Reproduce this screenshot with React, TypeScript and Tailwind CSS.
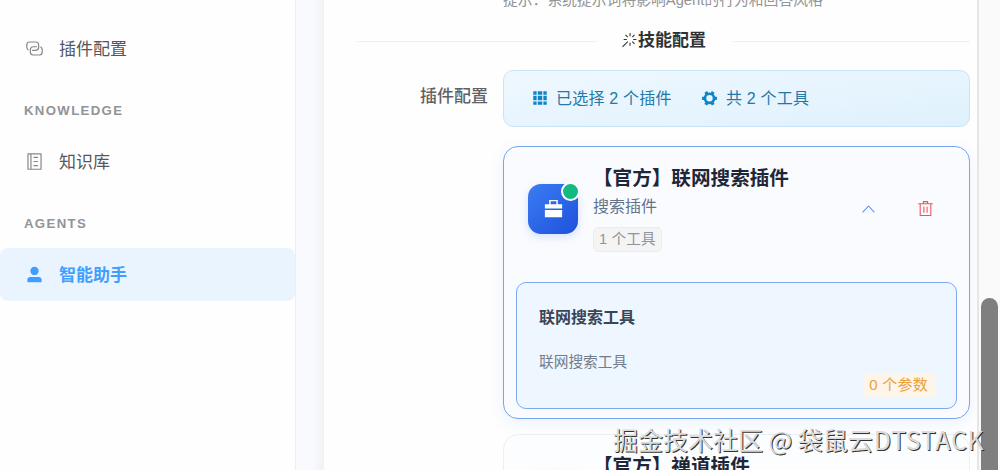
import React from 'react';
import clsx from 'clsx';

interface IconProps {
  paths: string[];
  className?: string;
}

const Icon: React.FC<IconProps> = ({ paths, className }) => (
  <svg viewBox="0 0 1024 1024" fill="currentColor" className={clsx('shrink-0', className)}>
    {paths.map((d) => (
      <path key={d} d={d} />
    ))}
  </svg>
);

const icons = {
  connection: [
    'M640 384v64H448a128 128 0 0 0-128 128v128a128 128 0 0 0 128 128h320a128 128 0 0 0 128-128V576a128 128 0 0 0-64-110.848V394.88c74.56 26.368 128 97.472 128 181.056v128a192 192 0 0 1-192 192H448a192 192 0 0 1-192-192V576a192 192 0 0 1 192-192z',
    'M384 640v-64h192a128 128 0 0 0 128-128V320a128 128 0 0 0-128-128H256a128 128 0 0 0-128 128v128a128 128 0 0 0 64 110.848v70.272A192.064 192.064 0 0 1 64 448V320a192 192 0 0 1 192-192h320a192 192 0 0 1 192 192v128a192 192 0 0 1-192 192z',
  ],
  memo: [
    'M480 256h192a32 32 0 0 1 0 64H480a32 32 0 0 1 0-64m0 224h192a32 32 0 0 1 0 64H480a32 32 0 0 1 0-64m0 224h192a32 32 0 0 1 0 64H480a32 32 0 0 1 0-64',
    'M160 64h704a32 32 0 0 1 32 32v832a32 32 0 0 1-32 32H160a32 32 0 0 1-32-32V96a32 32 0 0 1 32-32m32 832h96V128h-96zm160 0h480V128H352z',
  ],
  user: [
    'M288 320a224 224 0 1 0 448 0 224 224 0 1 0-448 0m544 608H160a32 32 0 0 1-32-32v-96a160 160 0 0 1 160-160h448a160 160 0 0 1 160 160v96a32 32 0 0 1-32 32z',
  ],
  magic: [
    'M512 64h64v192h-64zm0 576h64v192h-64zM160 480v-64h192v64zm576 0v-64h192v64zM249.856 199.04l45.248-45.184L430.848 289.6 385.6 334.848 249.856 199.104zM657.152 606.4l45.248-45.248 135.744 135.744-45.248 45.248zM114.048 923.2 68.8 877.952l316.8-316.8 45.248 45.248zM702.4 334.848 657.152 289.6l135.744-135.744 45.248 45.248z',
  ],
  grid: [
    'M640 384v256H384V384zm64 0h192v256H704zm-64 512H384V704h256zm64 0V704h192v192zm-64-768v192H384V128zm64 0h192v192H704zM320 384v256H128V384zm0 512H128V704h192zm0-768v192H128V128z',
  ],
  tools: [
    'M764.416 254.72a351.68 351.68 0 0 1 86.336 149.184H960v192.064H850.752a351.68 351.68 0 0 1-86.336 149.312l54.72 94.72-166.272 96-54.592-94.72a352.64 352.64 0 0 1-172.48 0L371.136 936l-166.272-96 54.72-94.72a351.68 351.68 0 0 1-86.336-149.312H64v-192h109.248a351.68 351.68 0 0 1 86.336-149.312L204.8 160l166.208-96h.192l54.656 94.592a352.64 352.64 0 0 1 172.48 0L652.8 64h.128L819.2 160l-54.72 94.72zM704 499.968a192 192 0 1 0-384 0 192 192 0 0 0 384 0',
  ],
  briefcase: ['M320 320V128h384v192h192v192H128V320zM128 576h768v320H128zm256-256h256.064V192H384z'],
  arrowUp: [
    'm488.832 344.32-339.84 356.672a32 32 0 0 0 0 44.16l.384.384a29.44 29.44 0 0 0 42.688 0l320-335.872 319.872 335.872a29.44 29.44 0 0 0 42.688 0l.384-.384a32 32 0 0 0 0-44.16L535.168 344.32a32 32 0 0 0-46.336 0',
  ],
  trash: [
    'M160 256H96a32 32 0 0 1 0-64h256V95.936a32 32 0 0 1 32-32h256a32 32 0 0 1 32 32V192h256a32 32 0 1 1 0 64h-64v672a32 32 0 0 1-32 32H192a32 32 0 0 1-32-32zm448-64v-64H416v64zM224 896h576V256H224zm192-128a32 32 0 0 1-32-32V416a32 32 0 0 1 64 0v320a32 32 0 0 1-32 32m192 0a32 32 0 0 1-32-32V416a32 32 0 0 1 64 0v320a32 32 0 0 1-32 32',
  ],
};

interface NavItemProps {
  icon: string[];
  label: string;
  active?: boolean;
}

const NavItem: React.FC<NavItemProps> = ({ icon, label, active = false }) => (
  <div
    className={clsx(
      'flex h-[53px] items-center gap-[15px] rounded-lg pl-[25px] text-[17px]',
      active ? 'bg-[#eaf4ff] font-bold text-[#409eff]' : 'text-[#55575b]'
    )}
  >
    <Icon paths={icon} className={clsx('mb-px size-[19px]', !active && 'text-[#85878b]')} />
    <span className="pt-0.5">{label}</span>
  </div>
);

const NavGroup: React.FC<{ title: string }> = ({ title }) => (
  <div className="flex h-[60px] items-center pl-6 pt-3 text-[13.2px] font-bold tracking-[1.35px] text-[#929497]">
    {title}
  </div>
);

const Sidebar = () => (
  <aside className="h-full w-[296px] shrink-0 border-r border-[#eceef2] bg-[#fefefe] pt-[22px]">
    <NavItem icon={icons.connection} label="插件配置" />
    <NavGroup title="KNOWLEDGE" />
    <NavItem icon={icons.memo} label="知识库" />
    <NavGroup title="AGENTS" />
    <NavItem icon={icons.user} label="智能助手" active />
  </aside>
);

interface PluginHeaderProps {
  name: string;
  description: string;
  count: number;
}

const PluginHeader: React.FC<PluginHeaderProps> = ({ name, description, count }) => (
  <div className="flex h-[124px] items-center pl-6 pr-[35px]">
    <div className="relative flex size-[50px] items-center justify-center rounded-[13px] bg-linear-to-br from-[#3b7cf3] to-[#1f50dc] text-white shadow-[0_3px_10px_rgba(59,130,246,0.2)]">
      <Icon paths={icons.briefcase} className="mb-px size-[23px]" />
      <span className="absolute -right-[2px] -top-[2px] size-[19px] rounded-full border-2 border-white bg-[#14b881]" />
    </div>
    <div className="ml-[15px] flex flex-1 flex-col items-start">
      <div className="text-[19.6px] font-bold leading-[27px] text-[#1e2737]">{name}</div>
      <div className="mt-px text-[16px] leading-[28px] text-[#64748b]">{description}</div>
      <div className="mb-px mt-[6px] h-[25px] rounded-[5px] border border-[#ececee] bg-[#f4f4f5] px-[5px] text-[14.6px] leading-[22px] tracking-[0.15px] text-[#909399]">
        {count} 个工具
      </div>
    </div>
    <div className="mb-0.5 flex items-center gap-10">
      <Icon paths={icons.arrowUp} className="size-[17px] text-[#5b8bf0]" />
      <Icon paths={icons.trash} className="size-[17px] text-[#ea5555]" />
    </div>
  </div>
);

const SkillDivider = () => (
  <div className="flex h-6 shrink-0 items-center pl-[33px] pr-[7px]">
    <div className="h-px w-[240px] bg-[#f0f0f1]" />
    <div className="ml-6 mr-[27px] flex items-center text-[17px] font-bold text-[#303133]">
      <Icon paths={icons.magic} className="mb-0.5 size-[17px]" />
      <span>技能配置</span>
    </div>
    <div className="h-px flex-1 bg-[#f0f0f1]" />
  </div>
);

const Summary = () => (
  <div className="flex h-[57px] items-center rounded-[10px] border border-[#c8e5f8] bg-linear-to-br from-[#eff8ff] to-[#dff1fd] pl-[27px] text-[16px] tracking-[0.2px] text-[#2477a6]">
    <Icon paths={icons.grid} className="mb-px size-[18px] text-[#0c86c8]" />
    <span className="ml-[7px] w-[145px]">已选择 2 个插件</span>
    <Icon paths={icons.tools} className="mb-px size-[17px] text-[#0c86c8]" />
    <span className="ml-2">共 2 个工具</span>
  </div>
);

const ToolPanel = () => (
  <div className="mx-3 mt-[11px] flex h-[127px] flex-col rounded-[10px] border border-[#7ea9ec] bg-[#eef6ff] pl-[22px] pr-5">
    <div className="mt-[23px] text-[16px] font-bold leading-6 text-[#3a4657]">联网搜索工具</div>
    <div className="mt-5 text-[14.7px] leading-6 text-[#747c89]">联网搜索工具</div>
    <div className="-mt-px h-6 self-end rounded-[4px] bg-[#fdf5ea] pl-[6px] pr-[8px] text-[15px] leading-6 tracking-[0.25px] text-[#eaa13f]">
      0 个参数
    </div>
  </div>
);

const App = () => (
  <div className="relative flex h-[470px] w-[1000px] overflow-hidden bg-white font-['Liberation_Sans','Noto_Sans_CJK_SC',sans-serif]">
    <Sidebar />
    <div className="w-7 shrink-0 bg-linear-to-r from-[#f9fafd] from-60% to-[#f1f2f4]" />

    <main className="flex h-full w-[653px] shrink-0 flex-col bg-[#fefefe]">
      <div className="-mt-3 h-[41px] shrink-0 pl-[179px] text-[14.8px] leading-6 text-[#929497]">
        提示：系统提示词将影响Agent的行为和回答风格
      </div>
      <SkillDivider />
      <div className="flex shrink-0 pl-[96px] pr-[7px] pt-[17px]">
        <div className="w-[83px] shrink-0 pt-[14px] text-[17px] font-medium text-[#5f6166]">插件配置</div>
        <div className="flex-1">
          <Summary />
          <section className="mt-[19px] h-[273px] rounded-[15px] border border-[#78a5eb] bg-[#fafbfe] shadow-[0_4px_16px_rgba(59,130,246,0.1)]">
            <PluginHeader name="【官方】联网搜索插件" description="搜索插件" count={1} />
            <ToolPanel />
          </section>
          <section className="mt-[15px] h-[273px] rounded-[15px] border border-[#eceff3] bg-[#fcfdfe]">
            <PluginHeader name="【官方】禅道插件" description="禅道插件" count={1} />
          </section>
        </div>
      </div>
    </main>

    {/* Scrollbar track and thumb */}
    <div className="h-full flex-1 border-l-2 border-[#e6e6e7] bg-[#fafafa] pl-0.5 pt-[298px]">
      <div className="h-[200px] w-[17px] rounded-full bg-[#7f7f80]" />
    </div>

    <div className="absolute left-[613px] top-[421px] whitespace-nowrap font-['Noto_Sans_CJK_SC',sans-serif] text-[25px] leading-9 text-[#dcdcdc] [text-shadow:1px_1px_0_#333]">
      掘金技术社区 @ 袋鼠云<span className="ml-px tracking-[0.7px]">DTSTACK</span>
    </div>
  </div>
);

export default App;
